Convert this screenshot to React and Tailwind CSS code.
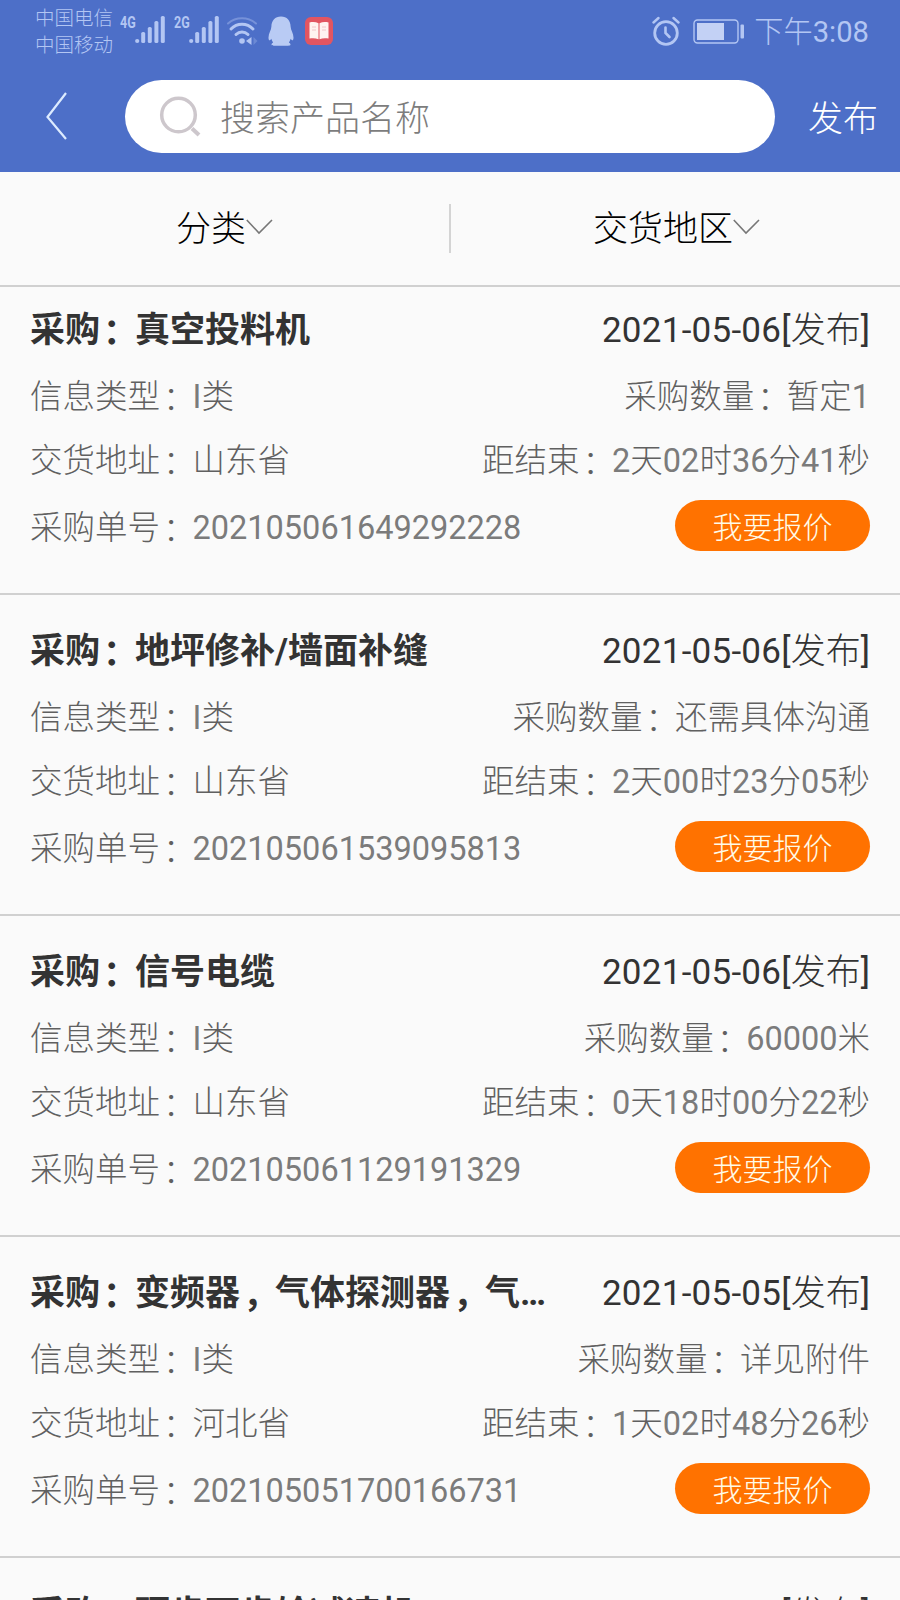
import clsx from 'clsx';

const orders = [
  { title: '真空投料机', date: '2021-05-06', amount: '暂定1', address: '山东省', left: '2天02时36分41秒', no: '202105061649292228' },
  { title: '地坪修补/墙面补缝', date: '2021-05-06', amount: '还需具体沟通', address: '山东省', left: '2天00时23分05秒', no: '202105061539095813' },
  { title: '信号电缆', date: '2021-05-06', amount: '60000米', address: '山东省', left: '0天18时00分22秒', no: '202105061129191329' },
  { title: '变频器，气体探测器，气…', date: '2021-05-05', amount: '详见附件', address: '河北省', left: '1天02时48分26秒', no: '202105051700166731' },
  { title: '硬齿面齿轮减速机', date: '2021-05-05' },
];

const Signal = ({ label }) => (
  <div className="flex h-[29px] w-[46px] items-start">
    <span className="w-[15px] origin-left scale-x-[0.76] text-[16.5px] leading-[15px] font-bold">{label}</span>
    <svg width="31" height="29" viewBox="0 0 31 29" fill="currentColor">
      <circle cx="2.2" cy="26" r="2.1" />
      <rect x="6.2" y="17" width="4" height="11" rx="1.6" />
      <rect x="12.8" y="12" width="4" height="16" rx="1.6" />
      <rect x="19.4" y="6" width="4" height="22" rx="1.6" />
      <rect x="25.8" y="1" width="4" height="27" rx="1.6" />
    </svg>
  </div>
);

const StatusBar = () => (
  <div className="flex h-[62px] items-center pr-[31px] pl-[35px] text-[#b3c6f3]">
    <div className="mt-[2px] w-[85px] text-[19.5px] leading-[27px] font-light whitespace-nowrap">
      <p>中国电信</p>
      <p>中国移动</p>
    </div>
    <div className="-mt-[3px] flex gap-[8px]">
      <Signal label="4G" />
      <Signal label="2G" />
    </div>
    <svg className="ml-[6px]" width="32" height="30" viewBox="0 0 32 30" fill="none" stroke="currentColor" strokeLinecap="round">
      <path d="M2 7.5C10 .5 22 .5 30 7.5" strokeWidth="2" opacity=".4" />
      <path d="M5 13C11 6.500 21 6.500 27 13" strokeWidth="3" />
      <path d="M10 18.500C13.500 15 18.500 15 22 18.500" strokeWidth="3" />
      <circle cx="16" cy="25" r="2.8" fill="currentColor" stroke="none" />
      <path d="M25.500 21v8l-5.500-4z" fill="currentColor" stroke="none" />
      <path d="M27.500 21v8l4-4z" fill="currentColor" stroke="none" opacity=".3" />
    </svg>
    <svg className="ml-[10px]" width="26" height="30" viewBox="0 0 26 30" fill="#b9cbf4">
      <path d="M13 .5C7 .5 3.600 4.500 3.400 10.500 3.300 14 .5 17.500.5 21.500c0 2 .5 3 1.300 2.800.6-.2 1-.8 1.500-1.500.5 1.400 1 2.600 1.800 3.700-1 .6-1.600 1.200-1.600 2 0 .8.8 1.200 2.500 1.200h14c1.700 0 2.500-.4 2.500-1.200 0-.8-.6-1.400-1.600-2 .8-1.100 1.300-2.300 1.800-3.700.5.700.9 1.300 1.500 1.500.8.2 1.300-.8 1.300-2.800 0-4-2.800-7.500-2.900-11C22.400 4.500 19 .5 13 .5z" />
    </svg>
    <svg className="ml-[11px]" width="28" height="28" viewBox="0 0 28 28">
      <rect width="28" height="28" rx="6" fill="#e25561" />
      <path d="M4.500 5.500c3.500-.8 6.500-.5 9 .8v16c-2.500-1.200-5.500-1.500-9-.8zM23.500 5.500c-3.500-.8-6.500-.5-9 .8v16c2.500-1.200 5.500-1.500 9-.8z" fill="#fff3f1" />
      <path d="M7 10h4M7 13h4M17 10h4M17 13h4" stroke="#f3c6ca" />
    </svg>
    <svg className="ml-auto" width="28" height="30" viewBox="0 0 28 30" fill="none" stroke="currentColor" strokeLinecap="round">
      <circle cx="14" cy="17" r="11.3" strokeWidth="2.8" />
      <path d="M13.500 11.500v5.500l4 4" strokeWidth="2.6" />
      <path d="M1.500 6.500l5-4.500M26.500 6.500l-5-4.500" strokeWidth="2.4" />
    </svg>
    <svg className="ml-[13px]" width="52" height="25" viewBox="0 0 52 25">
      <rect x="1" y="1" width="44" height="23" rx="3.5" fill="none" stroke="currentColor" strokeWidth="1.4" />
      <rect x="4" y="4" width="27" height="17" fill="#c3d1f5" />
      <rect x="47.5" y="5.5" width="3.5" height="14" rx="1" fill="currentColor" />
    </svg>
    <span className="mt-[3px] ml-[9px] text-[29.2px] leading-none font-light whitespace-nowrap">下午<span className="font-normal">3:08</span></span>
  </div>
);

const SearchHeader = () => (
  <div className="flex h-[110px] items-start pt-[18px] font-light">
    <svg className="mt-[12px] ml-[46px] shrink-0" width="22" height="48" viewBox="0 0 22 48" fill="none" stroke="#dcebff" strokeWidth="2.2">
      <path d="M20 1L1.500 25 20 47" />
    </svg>
    <div className="ml-[57px] flex h-[73px] w-[650px] items-center rounded-full bg-white pl-[34px]">
      <svg width="42" height="42" viewBox="0 0 42 42" fill="none" stroke="#cdc7cc">
        <circle cx="19.5" cy="19" r="16.8" strokeWidth="3.5" />
        <path d="M33 32.500l7 6.500" strokeWidth="4" />
      </svg>
      <span className="mt-[8px] ml-[19px] text-[35px] text-[#7d7d7d]">搜索产品名称</span>
    </div>
    <span className="mt-[2px] ml-[33px] text-[35px] leading-[75px] text-white">发布</span>
  </div>
);

const Filter = ({ children, className }) => (
  <div className={clsx('flex w-[449px] items-center text-[35px] font-light text-black', className)}>
    <span className="mt-[3px]">{children}</span>
    <svg className="-mt-[4px]" width="27" height="16" viewBox="0 0 27 16" fill="none" stroke="#777" strokeWidth="1.6">
      <path d="M.8 1L13 14 26 1" />
    </svg>
  </div>
);

// full-width punctuation, nudged towards the middle of its cell
const Mark = ({ children }) => <span className="inline-block translate-x-[3px] translate-y-[2px]">{children}</span>;

const Title = ({ text }) => text.split('，').map((part, i) => (
  <span key={i}>
    {i > 0 && <Mark>，</Mark>}
    {part}
  </span>
));

// digits keep the regular weight, the characters around them are light
const Value = ({ text }) => text.split(/([0-9I]+)/).filter(Boolean).map((part, i) => (
  <span key={i} className={/[0-9I]/.test(part) ? 'font-normal text-[#7b7b7b]' : 'font-light'}>{part}</span>
));

const Field = ({ label, value }) => (
  <span className="whitespace-nowrap">
    {label}<Mark>：</Mark><Value text={value} />
  </span>
);

const Order = ({ order, first }) => (
  <li className={clsx('px-[30px]', first ? 'h-[308px] pt-[20px]' : 'h-[321px] pt-[33px]', order.no && 'border-b-2 border-[#d0d0d0]')}>
    <div className="flex h-[48px] items-center justify-between text-[35px] whitespace-nowrap text-[#333]">
      <h2 className="leading-[48px] font-bold">采购<Mark>：</Mark><Title text={order.title} /></h2>
      <span><span className="tracking-[0.25px]">{order.date}[</span><span className="font-light">发布</span>]</span>
    </div>
    {order.no && (
      <div className="text-[32.5px] font-light text-[#606060]">
        <div className="mt-[10px] flex h-[64px] items-center justify-between">
          <Field label="信息类型" value="I类" />
          <Field label="采购数量" value={order.amount} />
        </div>
        <div className="flex h-[64px] items-center justify-between">
          <Field label="交货地址" value={order.address} />
          <Field label="距结束" value={order.left} />
        </div>
        <div className="mt-[6px] flex h-[52px] items-center justify-between">
          <span className="mt-[6px]"><Field label="采购单号" value={order.no} /></span>
          <button className="h-[51px] w-[195px] rounded-full bg-[#ff7200] pt-[4px] text-[30px] leading-[47px] text-[#fffbe8]">我要报价</button>
        </div>
      </div>
    )}
  </li>
);

const App = () => (
  <div className="h-[1600px] w-[900px] overflow-hidden bg-[#fafafa] font-['Roboto','Noto_Sans_CJK_SC',sans-serif]">
    <header className="h-[172px] bg-[#4d6fc8]">
      <StatusBar />
      <SearchHeader />
    </header>
    <nav className="flex h-[115px] items-center border-b-2 border-[#d0d0d0]">
      <Filter className="pl-[176px]">分类</Filter>
      <div className="h-[49px] w-[2px] bg-[#d4d4d4]" />
      <Filter className="pl-[142px]">交货地区</Filter>
    </nav>
    <ul>
      {orders.map((order, i) => (
        <Order key={order.title} order={order} first={i === 0} />
      ))}
    </ul>
  </div>
);

export default App;
